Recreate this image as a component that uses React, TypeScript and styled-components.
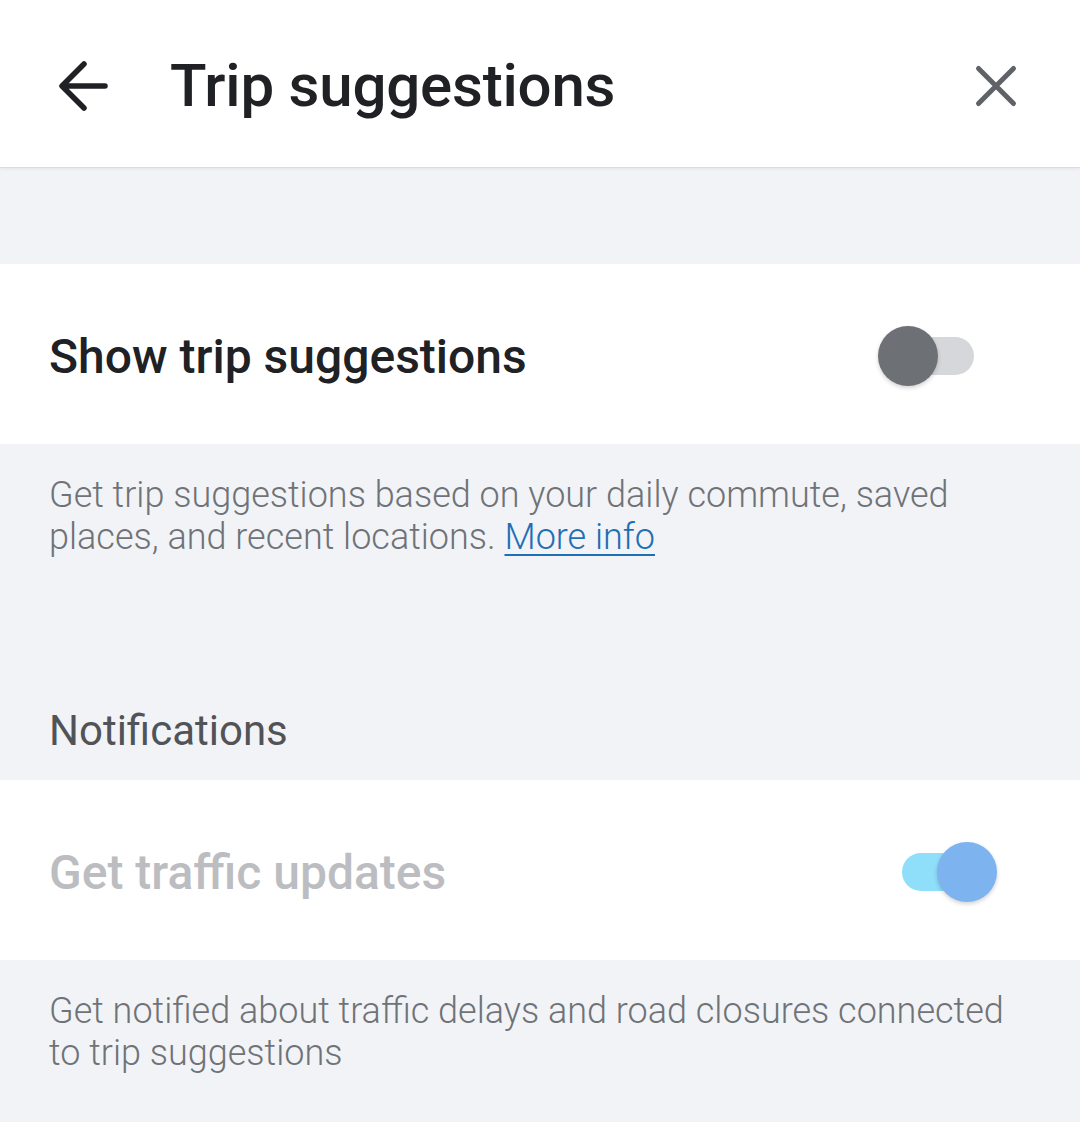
import React, { useState } from 'react'
import styled, { createGlobalStyle } from 'styled-components'

const GlobalStyle = createGlobalStyle`
  html, body {
    margin: 0;
    padding: 0;
    background: #f2f3f7;
    font-family: Roboto, "Noto Sans", sans-serif;
    -webkit-font-smoothing: antialiased;
  }
`

const Page = styled.div`
  width: 1080px;
  min-height: 1122px;
  background: #f2f3f7;
  display: flex;
  flex-direction: column;
`

const Header = styled.header`
  height: 167px;
  background: #fff;
  display: flex;
  align-items: center;
  padding: 4px 50px 0 50px;
  box-sizing: border-box;
  box-shadow: 0 1px 0 #dadbdf, 0 2px 3px rgba(0, 0, 0, 0.06);
  position: relative;
  z-index: 1;
`

const IconButton = styled.button`
  width: 68px;
  height: 68px;
  border: 0;
  padding: 0;
  background: none;
  display: flex;
  align-items: center;
  justify-content: center;
  cursor: pointer;
`

const Title = styled.h1`
  margin: 0 0 0 52px;
  flex: 1;
  font-size: 60px;
  font-weight: 500;
  color: #202124;
  letter-spacing: -0.2px;
`

const Spacer = styled.div<{ h: number }>`
  height: ${p => p.h}px;
`

const Row = styled.div`
  height: 180px;
  background: #fff;
  display: flex;
  align-items: center;
  justify-content: space-between;
  padding: 4px 106px 0 49px;
  box-sizing: border-box;
`

const RowLabel = styled.span<{ disabled?: boolean }>`
  font-size: 48px;
  font-weight: 500;
  color: ${p => (p.disabled ? '#bcbdc1' : '#202124')};
`

const Description = styled.p`
  margin: 0;
  padding: 30px 49px 0;
  font-size: 36px;
  font-weight: 300;
  line-height: 42px;
  color: #6f7377;
`

const MoreInfo = styled.a`
  color: #1e6fb4;
  text-decoration: underline;
  text-underline-offset: 5px;
  text-decoration-thickness: 2px;
  font-weight: 300;
`

const SectionHeader = styled.h2`
  margin: 0;
  padding: 0 49px;
  height: 73px;
  font-size: 42px;
  font-weight: 400;
  line-height: 48px;
  color: #505357;
`

const Track = styled.div<{ on: boolean }>`
  position: relative;
  width: 72px;
  height: 38px;
  border-radius: 19px;
  background: ${p => (p.on ? '#8fdefa' : '#d6d7db')};
  cursor: pointer;
`

const Thumb = styled.div<{ on: boolean }>`
  position: absolute;
  top: -11px;
  left: ${p => (p.on ? '35px' : '-24px')};
  width: 60px;
  height: 60px;
  border-radius: 50%;
  background: ${p => (p.on ? '#7db3ee' : '#6d7075')};
  box-shadow: 0 2px 4px rgba(0, 0, 0, 0.18);
`

const Toggle = ({ on, onClick }: { on: boolean; onClick: () => void }) => (
  <Track on={on} onClick={onClick}>
    <Thumb on={on} />
  </Track>
)

const BackIcon = () => (
  <svg width="60" height="60" viewBox="0 0 60 60" fill="none">
    <path d="M51 30H10M30 8L8 30l22 22" stroke="#202124" strokeWidth="5.5" strokeLinecap="round" strokeLinejoin="round" />
  </svg>
)

const CloseIcon = () => (
  <svg width="50" height="50" viewBox="0 0 50 50" fill="none">
    <path d="M7.5 7.5l35 35M42.5 7.5l-35 35" stroke="#5f6368" strokeWidth="5" strokeLinecap="round" />
  </svg>
)

export default function App() {
  const [suggest, setSuggest] = useState(false)
  const [traffic, setTraffic] = useState(true)

  return (
    <Page>
      <GlobalStyle />
      <Header>
        <IconButton aria-label="Back">
          <BackIcon />
        </IconButton>
        <Title>Trip suggestions</Title>
        <IconButton aria-label="Close">
          <CloseIcon />
        </IconButton>
      </Header>
      <Spacer h={97} />
      <Row>
        <RowLabel>Show trip suggestions</RowLabel>
        <Toggle on={suggest} onClick={() => setSuggest(!suggest)} />
      </Row>
      <Description>
        Get trip suggestions based on your daily commute, saved places, and recent locations.{' '}
        <MoreInfo href="#">More info</MoreInfo>
      </Description>
      <Spacer h={149} />
      <SectionHeader>Notifications</SectionHeader>
      <Row>
        <RowLabel disabled>Get traffic updates</RowLabel>
        <Toggle on={traffic} onClick={() => setTraffic(!traffic)} />
      </Row>
      <Description>
        Get notified about traffic delays and road closures connected to trip suggestions
      </Description>
    </Page>
  )
}
